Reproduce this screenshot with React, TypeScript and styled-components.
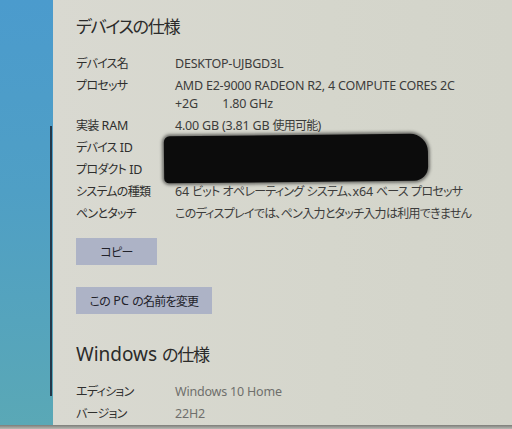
import React from "react";
import styled, { createGlobalStyle } from "styled-components";

const GlobalStyle = createGlobalStyle`
  html, body {
    margin: 0;
    padding: 0;
    background: #d6d6cc;
  }
  body {
    font-family: "Noto Sans", "Noto Sans CJK JP", sans-serif;
    font-feature-settings: "palt";
  }
`;

interface SpecRow {
  label: string;
  value: string[];
}

const deviceSpecs: SpecRow[] = [
  { label: "デバイス名", value: ["DESKTOP-UJBGD3L"] },
  {
    label: "プロセッサ",
    value: ["AMD E2-9000 RADEON R2, 4 COMPUTE CORES 2C", "+2G        1.80 GHz"],
  },
  { label: "実装 RAM", value: ["4.00 GB (3.81 GB 使用可能)"] },
  { label: "デバイス ID", value: [""] },
  { label: "プロダクト ID", value: [""] },
  { label: "システムの種類", value: ["64 ビット オペレーティング システム、x64 ベース プロセッサ"] },
  { label: "ペンとタッチ", value: ["このディスプレイでは、ペン入力とタッチ入力は利用できません"] },
];

const windowsSpecs: SpecRow[] = [
  { label: "エディション", value: ["Windows 10 Home"] },
  { label: "バージョン", value: ["22H2"] },
];

// Japanese glyphs on the screen are narrower than Noto's, so CJK runs get their own span
const cjk = /([\u3000-\u30ff\u4e00-\u9fff\uff00-\uffef]+)/;

function Text({ children, $title }: { children: string; $title?: boolean }) {
  return (
    <>
      {children.split(cjk).map((part, i) =>
        cjk.test(part) ? (
          <Jp key={i} $title={$title}>
            {part}
          </Jp>
        ) : (
          part
        )
      )}
    </>
  );
}

function Specs({ rows, muted, children }: { rows: SpecRow[]; muted?: boolean; children?: React.ReactNode }) {
  return (
    <SpecTable>
      {rows.map((row) => (
        <Row key={row.label}>
          <Label>
            <Text>{row.label}</Text>
          </Label>
          <Value $muted={muted}>
            {row.value.map((line, i) => (
              <Line key={i}>
                <Text>{line}</Text>
              </Line>
            ))}
          </Value>
        </Row>
      ))}
      {children}
    </SpecTable>
  );
}

export default function App(): React.ReactElement {
  return (
    <>
      <GlobalStyle />
      <Screen>
        <Sidebar>
          <Divider />
        </Sidebar>
        <Main>
          <Heading>
            <Text $title>デバイスの仕様</Text>
          </Heading>
          <Specs rows={deviceSpecs}>
            <Redaction />
          </Specs>
          <Button $width={81} $gap={13}>
            <Text>コピー</Text>
          </Button>
          <Button $width={136} $gap={22}>
            <Text>この PC の名前を変更</Text>
          </Button>
          <Heading $gap={25}>
            <Text $title>Windows の仕様</Text>
          </Heading>
          <Specs rows={windowsSpecs} muted />
        </Main>
      </Screen>
      <Bezel />
    </>
  );
}

const Jp = styled.span<{ $title?: boolean }>`
  font-family: "Noto Sans CJK JP", sans-serif;
  font-size: ${(p) => (p.$title ? "0.9em" : "0.96em")};
  letter-spacing: ${(p) => (p.$title ? "-0.08em" : "-0.06em")};
  vertical-align: baseline;
  line-height: 1;
`;

const Screen = styled.div`
  display: flex;
  width: 512px;
  height: 425px;
  overflow: hidden;
`;

const Sidebar = styled.div`
  width: 53px;
  flex-shrink: 0;
  display: flex;
  justify-content: flex-end;
  padding-top: 126px;
  padding-right: 1px;
  box-sizing: border-box;
  background: linear-gradient(180deg, #4b9bcd 0%, #4f9fc5 45%, #5aa8b6 100%);
`;

const Divider = styled.div`
  width: 2px;
  height: 270px;
  background: #23384a;
`;

const Main = styled.div`
  flex: 1;
  padding: 11px 0 0 23px;
  background: linear-gradient(90deg, #d9d9d1 0%, #d5d6cc 60%, #d3d4ca 100%);
  color: #333331;
`;

const Heading = styled.div<{ $gap?: number }>`
  margin-top: ${(p) => p.$gap ?? 0}px;
  height: 30px;
  font-size: 19px;
  line-height: 30px;
  color: #2b2b2a;
  white-space: pre;
`;

const SpecTable = styled.div`
  position: relative;
  margin-top: 12px;
  display: flex;
  flex-direction: column;
`;

const Row = styled.div`
  display: grid;
  grid-template-columns: 99px 1fr;
  padding: 2px 0;
  font-size: 12.5px;
  line-height: 18px;
  letter-spacing: -0.2px;
`;

const Label = styled.div`
  height: 18px;
  white-space: pre;
  color: #2f2f2e;
`;

const Value = styled.div<{ $muted?: boolean }>`
  color: ${(p) => (p.$muted ? "#6f6f6c" : "#3c3c3b")};
`;

const Line = styled.div`
  white-space: pre;
  height: 18px;
`;

const Redaction = styled.div`
  position: absolute;
  left: 88px;
  top: 82px;
  width: 264px;
  height: 47px;
  background: #0c0c0c;
  border-radius: 6px 18px 14px 5px;
  box-shadow: 0 0 3px 2px rgba(20, 20, 20, 0.5);
  transform: rotate(-0.6deg);
`;

const Button = styled.div<{ $width: number; $gap: number }>`
  margin-top: ${(p) => p.$gap}px;
  width: ${(p) => p.$width}px;
  height: 27px;
  display: flex;
  align-items: center;
  justify-content: center;
  background: #adb3c6;
  color: #22222a;
  font-size: 12.5px;
  white-space: pre;
`;

const Bezel = styled.div`
  height: 4px;
  width: 512px;
  background: linear-gradient(180deg, #7c7c78 0%, #b9bab5 100%);
`;
